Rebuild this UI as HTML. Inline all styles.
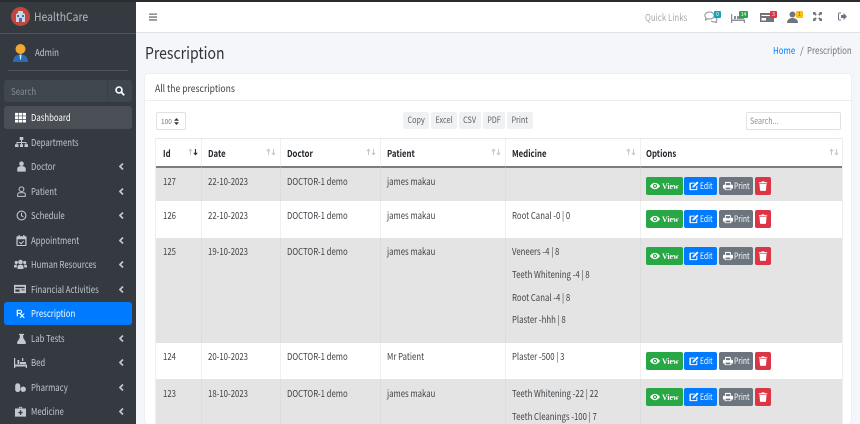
<!DOCTYPE html>
<html><head><meta charset="utf-8"><style>
*{box-sizing:border-box}
html,body{margin:0;padding:0}
body{width:860px;height:424px;overflow:hidden;position:relative;background:#f4f6f9;font-family:"Noto Sans CJK SC","Liberation Sans",sans-serif;color:#212529;filter:blur(.3px)}
.a{position:absolute;white-space:nowrap}
.x{transform:scaleX(.83);transform-origin:0 0}
.t{font-size:9.5px;line-height:12px;color:#3f4448;transform:scaleX(.82);transform-origin:0 0}
.h{font-size:9.5px;line-height:12px;font-weight:700;color:#212529;transform:scaleX(.82);transform-origin:0 0}
.m{position:absolute;left:4px;width:128px;height:23px;color:#c2c7d0;font-size:9.5px;line-height:23px}
.m span{position:absolute;left:27px;white-space:nowrap;transform:scaleX(.82);transform-origin:0 0}
.m svg{position:absolute;top:6px;width:11px;height:11px;fill:#c2c7d0}
.m i{position:absolute;left:115px;top:8px;width:5px;height:7px}
.m i svg{left:0;top:0;width:5px;height:7px}
.b{position:absolute;height:18px;border-radius:2px;color:#fff;font-size:8.5px;line-height:18px;white-space:nowrap}
.b svg{position:absolute;top:4px;width:10px;height:10px;fill:#fff}
.b span{transform:scaleX(.8);transform-origin:0 0}
.g{background:#28a745;left:646px;width:37px;font-family:"Liberation Serif",serif;font-weight:700}
.g span{position:absolute;left:16px;transform:scaleX(.92)}
.e{background:#007bff;left:684px;width:33px}
.e span{position:absolute;left:16px}
.p{background:#6c757d;left:719px;width:34px}
.p span{position:absolute;left:15px}
.d{background:#dc3545;left:755px;width:16px}
.ex{position:absolute;top:112px;height:17px;background:#f0f1f3;border-radius:2px;font-size:8.5px;line-height:17px;color:#5a6066;text-align:center}
.ex span{display:inline-block;transform:scaleX(.85)}
.s{position:absolute;top:148px;width:10px;height:8px}
.bd{position:absolute;width:7px;height:7px;border-radius:1px;font-size:5px;line-height:7px;text-align:center;color:#fff}
.n{position:absolute;top:11px;width:14px;height:12px;fill:#8b9096}
</style></head><body>
<svg width="0" height="0" style="position:absolute"><defs>
<symbol id="ch" viewBox="0 0 5 7"><path d="M4 .5L1 3.5l3 3" fill="none" stroke="#c2c7d0" stroke-width="1.7"/></symbol>
<symbol id="eye" viewBox="0 0 12 12"><path fill-rule="evenodd" d="M6 2.2C3.2 2.2 1.2 4.2 0 6c1.200 1.800 3.200 3.800 6 3.800S10.800 7.800 12 6c-1.200-1.800-3.200-3.800-6-3.800zM6 3.500a2.500 2.500 0 1 1 0 5 2.500 2.500 0 0 1 0-5zM6 4.800a1.200 1.200 0 1 0 0 2.400 1.200 1.200 0 0 0 0-2.400z"/></symbol>
<symbol id="ed" viewBox="0 0 12 12"><path d="M1.500 2h6L6.300 3.200H2.200v6.600h6.600V6.500L10 5.300V10a1 1 0 0 1-1 1H1.500a1 1 0 0 1-1-1V3a1 1 0 0 1 1-1zM9.800.6l1.600 1.600L6 7.600l-2 .4.400-2z"/></symbol>
<symbol id="pr" viewBox="0 0 12 12"><path fill-rule="evenodd" d="M2.500 1h6l1 1v2.500H11a1 1 0 0 1 1 1V9h-2v2H2V9H0V5.500a1 1 0 0 1 1-1h1.500zM3.500 2v3h5V2.500H3.500zM3.200 8v2h5.600V8z"/></symbol>
<symbol id="tr" viewBox="0 0 12 12"><path d="M4.500.5h3l.5 1h3v1.300H1V1.500h3zM1.800 3.600h8.400L9.600 11a1 1 0 0 1-1 .9H3.400a1 1 0 0 1-1-.9z"/></symbol>
<symbol id="ar" viewBox="0 0 10 8"><path d="M2.500 7V1.500M.8 3.200L2.500 1.300l1.700 1.900" fill="none" stroke="#c4c6c8" stroke-width="1"/><path d="M7.500 1v5.500M5.800 4.800l1.700 1.900 1.700-1.900" fill="none" stroke="#c4c6c8" stroke-width="1"/></symbol>
<symbol id="ar2" viewBox="0 0 10 8"><path d="M2.500 7V1.500M.8 3.200L2.500 1.300l1.700 1.900" fill="none" stroke="#c4c6c8" stroke-width="1"/><path d="M7.500 1v5.500M5.800 4.800l1.700 1.900 1.700-1.900" fill="none" stroke="#333" stroke-width="1.100"/></symbol>
</defs></svg>

<!-- Sidebar -->
<div class="a" style="left:0;top:0;width:136px;height:424px;background:#343a40"></div>
<div class="a" style="left:0;top:0;width:860px;height:2px;background:#2a2d30"></div>
<div class="a" style="left:0;top:33px;width:136px;height:1px;background:#4b545c"></div>
<div class="a" style="left:8px;top:70px;width:120px;height:1px;background:#4b545c"></div>
<svg class="a" style="left:11px;top:7px" width="19" height="19" viewBox="0 0 19 19"><circle cx="9.500" cy="9.500" r="9.500" fill="#c0473f"/><path d="M5 15V7l2-1V4h5v2l2 1v8z" fill="#c9d6e4"/><path d="M8 15v-4h3v4zM6 8h2v2H6zM11 8h2v2h-2z" fill="#4a6fa5"/></svg>
<div class="a" style="left:34px;top:9px;font-size:11.500px;line-height:16px;color:#b5b9be;transform:scaleX(.9);transform-origin:0 0">HealthCare</div>
<svg class="a" style="left:13px;top:43px" width="15" height="20" viewBox="0 0 15 20"><circle cx="7.500" cy="6" r="5" fill="#f0a830"/><path d="M0 19c0-5 3-7.500 7.500-7.500S15 14 15 19z" fill="#2b6cb8"/><path d="M6.500 11.500h2l-.5 5h-1z" fill="#dce6f0"/></svg>
<div class="a x" style="left:35px;top:46px;font-size:9.500px;line-height:13px;color:#c2c7d0">Admin</div>
<div class="a" style="left:4px;top:80px;width:128px;height:22px;background:#3f474e;border-radius:3px"></div>
<div class="a" style="left:107px;top:80px;width:1px;height:22px;background:#383f45"></div>
<div class="a x" style="left:11px;top:85px;font-size:9.500px;line-height:12px;color:#868c92">Search</div>
<svg class="a" style="left:115px;top:86px" width="10" height="10" viewBox="0 0 10 10"><circle cx="4" cy="4" r="3" fill="none" stroke="#fff" stroke-width="1.600"/><path d="M6.300 6.300L9.200 9.200" stroke="#fff" stroke-width="1.800"/></svg>

<div class="m" style="top:106px;background:#494f55;border-radius:3px;color:#fff"><svg viewBox="0 0 12 12" style="left:11px;fill:#fff"><path d="M0 1h3.500v3H0zM4.200 1h3.600v3H4.200zM8.500 1H12v3H8.500zM0 4.700h3.500v3H0zM4.200 4.700h3.600v3H4.200zM8.500 4.700H12v3H8.500zM0 8.400h3.500v3H0zM4.200 8.400h3.600v3H4.200zM8.500 8.400H12v3H8.500z"/></svg><span>Dashboard</span></div>
<div class="m" style="top:130.500px"><svg viewBox="0 0 13 13" style="left:10.500px;width:13px;height:13px;top:5px"><path d="M4.700 1h3.600v3H7v2h4.500v2.300H13V11H9.500V8.300h1V7h-3.500v1.300h1V11H5V8.300h1V7H2.500v1.300h1V11H0V8.300h1.500V6H6V4H4.700z"/></svg><span>Departments</span></div>
<div class="m" style="top:155px"><svg viewBox="0 0 13 13" style="left:11.500px"><circle cx="6.500" cy="3.200" r="2.700"/><path d="M1.500 12.500V9c0-1.800 2-3 5-3s5 1.200 5 3v3.500z"/></svg><span>Doctor</span><i><svg viewBox="0 0 5 7"><use href="#ch"/></svg></i></div>
<div class="m" style="top:179.500px"><svg viewBox="0 0 13 13" style="left:12px"><path fill="none" stroke="#c2c7d0" stroke-width="1.200" d="M6.500 1a2.800 2.800 0 1 0 0 5.600 2.800 2.800 0 0 0 0-5.600zM2 12.200V10c0-1.300 1-2 2.200-2h4.600c1.200 0 2.200.7 2.200 2v2.200z"/></svg><span>Patient</span><i><svg viewBox="0 0 5 7"><use href="#ch"/></svg></i></div>
<div class="m" style="top:204px"><svg viewBox="0 0 13 13" style="left:11.500px"><circle cx="6.500" cy="6.500" r="5.200" fill="none" stroke="#c2c7d0" stroke-width="1.300"/><path d="M6.500 3.200v3.500l2.300 1.500" fill="none" stroke="#c2c7d0" stroke-width="1.200"/></svg><span>Schedule</span><i><svg viewBox="0 0 5 7"><use href="#ch"/></svg></i></div>
<div class="m" style="top:228.500px"><svg viewBox="0 0 13 13" style="left:11.500px"><path fill-rule="evenodd" d="M3 0h1.500v1.500h4V0H10v1.500h1.500a1 1 0 0 1 1 1V12a1 1 0 0 1-1 1h-10a1 1 0 0 1-1-1V2.500a1 1 0 0 1 1-1H3zM2 5v6.800h9V5z"/><path d="M4 8.300l2 2 3.200-3.300" fill="none" stroke="#c2c7d0" stroke-width="1.200"/></svg><span>Appointment</span><i><svg viewBox="0 0 5 7"><use href="#ch"/></svg></i></div>
<div class="m" style="top:253px"><svg viewBox="0 0 13 13" style="left:10px;width:13px;height:13px;top:5px"><circle cx="6.500" cy="4" r="2.300"/><circle cx="2.300" cy="4.500" r="1.600"/><circle cx="10.700" cy="4.500" r="1.600"/><path d="M3.500 11V8.500c0-1 1-1.800 3-1.800s3 .8 3 1.800V11zM0 9.500V8c0-1 .8-1.500 2.800-1.500v3zM13 9.500V8c0-1-.8-1.500-2.800-1.500v3z"/></svg><span>Human Resources</span><i><svg viewBox="0 0 5 7"><use href="#ch"/></svg></i></div>
<div class="m" style="top:277.500px"><svg viewBox="0 0 13 13" style="left:10px;width:12px;height:12px;top:5.500px"><path fill-rule="evenodd" d="M0 2h13v9H0zM1.500 4v1.500h10V4zM1.500 7v2.500H6V7zM8 7v1h3.500V7z"/></svg><span>Financial Activities</span><i><svg viewBox="0 0 5 7"><use href="#ch"/></svg></i></div>
<div class="m" style="top:302px;background:#007bff;border-radius:3px;color:#fff"><svg viewBox="0 0 13 13" style="left:12px;width:9px;height:9px;top:7px;fill:#fff"><path fill-rule="evenodd" d="M1 1h5a3 3 0 0 1 1 5.700L8.800 8.500 10.500 6.500H12.500L9.900 9.600l2.900 3.200H10.600L8.800 10.800 7 12.800H5L7.700 9.700 5 7H2.800v3.500H1zM2.800 2.600V5.400H6A1.400 1.400 0 0 0 6 2.600z"/></svg><span>Prescription</span></div>
<div class="m" style="top:326.500px"><svg viewBox="0 0 13 13" style="left:11.500px"><path d="M3.500 1h6v1.300h-1V5.500l3.200 5.500c.5 1-.2 2-1.200 2h-8c-1 0-1.700-1-1.200-2l3.200-5.500V2.300h-1z"/></svg><span>Lab Tests</span><i><svg viewBox="0 0 5 7"><use href="#ch"/></svg></i></div>
<div class="m" style="top:351px"><svg viewBox="0 0 13 13" style="left:10px;width:13px;height:13px;top:5px"><path d="M0 2h1.200v6.500H13V12h-1.200v-1.500H1.200V12H0zM3.500 4h1.800v4H3.500zM6 6h6v2H6zM8 2h1.300v3H8z"/></svg><span>Bed</span><i><svg viewBox="0 0 5 7"><use href="#ch"/></svg></i></div>
<div class="m" style="top:375.500px"><svg viewBox="0 0 13 13" style="left:11px"><path d="M3.200 1.500a3 3 0 0 1 3 3V9a3 3 0 0 1-6 0V4.500a3 3 0 0 1 3-3z"/><circle cx="9.700" cy="8.500" r="3.200"/></svg><span>Pharmacy</span><i><svg viewBox="0 0 5 7"><use href="#ch"/></svg></i></div>
<div class="m" style="top:400px"><svg viewBox="0 0 13 13" style="left:11px"><path fill-rule="evenodd" d="M4.500 1h4v2H13v9.500H0V3h4.500zM5.500 2v1h2V2zM5.800 5v2H4v1.500h1.800v2h1.500v-2H9V7H7.300V5z"/></svg><span>Medicine</span><i><svg viewBox="0 0 5 7"><use href="#ch"/></svg></i></div>

<!-- Topbar -->
<div class="a" style="left:136px;top:2px;width:724px;height:31px;background:#fff;border-bottom:1px solid #dee2e6"></div>
<svg class="a" style="left:149px;top:13px" width="8" height="8" viewBox="0 0 8 8"><path d="M0 .5h8v1.300H0zM0 3.400h8v1.300H0zM0 6.300h8v1.300H0z" fill="#6c757d"/></svg>
<div class="a x" style="left:645px;top:11px;font-size:9.500px;line-height:13px;color:#a6abb0">Quick Links</div>
<svg class="n" style="left:704px" viewBox="0 0 14 12"><path d="M5.500 1C2.700 1 .8 2.600.8 4.500c0 1 .5 1.800 1.300 2.400L1.500 9l2.300-1.200c.5.100 1.100.2 1.700.2 2.800 0 4.700-1.600 4.700-3.500S8.300 1 5.500 1z" fill="none" stroke="#8b9096"/><path d="M11 6.500c1.200.5 2 1.200 2 2.300 0 .7-.4 1.200-.9 1.600l.4 1.300-1.800-.8c-1.500.2-2.800-.2-3.600-1" fill="none" stroke="#8b9096"/></svg>
<div class="bd" style="left:714px;top:11px;background:#17a2b8">0</div>
<svg class="n" style="left:731px" viewBox="0 0 14 12"><path d="M0 3h1.200v5.500H14V12h-1.200v-2H1.200v2H0zM3 5h2v3H3zM6 5h7v3H6z"/></svg>
<div class="bd" style="left:739px;top:11px;width:9px;background:#28a745">14</div>
<svg class="n" style="left:760px" viewBox="0 0 14 12"><path fill-rule="evenodd" d="M0 2h14v9H0zM1.500 4v1h11V4zM1.500 7v2.500H6V7z" fill="#6f757b"/></svg>
<div class="bd" style="left:770px;top:11px;background:#dc3545">3</div>
<svg class="n" style="left:787px" viewBox="0 0 14 12"><circle cx="5.500" cy="3.500" r="3" fill="#6f757b"/><path d="M0 12c0-3 2-5 5.500-5S11 9 11 12z" fill="#6f757b"/></svg>
<div class="bd" style="left:796px;top:11px;background:#ffc107;color:#555">1</div>
<svg class="a" style="left:813px;top:12px" width="9" height="9" viewBox="0 0 9 9"><path d="M0 0h3L2.200 .8 3.800 2.400 2.400 3.800.8 2.200 0 3zM9 0v3L8.200 2.200 6.600 3.800 5.200 2.400 6.800.8 6 0zM0 9V6l.8.800 1.600-1.600 1.400 1.400-1.600 1.600L3 9zM9 9H6l.8-.8-1.600-1.600 1.400-1.400 1.600 1.600L9 6z" fill="#6c757d"/></svg>
<svg class="a" style="left:838px;top:12px" width="9" height="9" viewBox="0 0 9 9"><path d="M3 1H1.500A1 1 0 0 0 .5 2v5a1 1 0 0 0 1 1H3" fill="none" stroke="#6c757d"/><path d="M5.500 1L9 4.500 5.500 8V6H3V3h2.500z" fill="#6c757d"/></svg>

<!-- Content header -->
<div class="a" style="left:145px;top:40px;font-size:16.500px;line-height:24px;color:#2f3337;transform:scaleX(.85);transform-origin:0 0">Prescription</div>
<div class="a x" style="left:773px;top:44px;font-size:9.500px;line-height:13px;color:#007bff">Home</div>
<div class="a" style="left:800px;top:44px;font-size:9.500px;line-height:13px;color:#6c757d">/</div>
<div class="a x" style="left:807px;top:44px;font-size:9.500px;line-height:13px;color:#6c757d">Prescription</div>

<!-- Card -->
<div class="a" style="left:145px;top:74px;width:706px;height:350px;background:#fff;border-radius:3px;box-shadow:0 0 1px rgba(0,0,0,.2)"></div>
<div class="a" style="left:145px;top:100px;width:706px;height:1px;background:#eceef0"></div>
<div class="a" style="left:155px;top:81px;font-size:10px;line-height:14px;color:#3a3f44;transform:scaleX(.86);transform-origin:0 0">All the prescriptions</div>

<div class="a" style="left:156px;top:112px;width:30px;height:18px;border:1px solid #dfe2e5;border-radius:2px;font-size:6.500px;line-height:16px;color:#6c757d;padding-left:4px">100</div>
<svg class="a" style="left:174px;top:118px" width="5" height="7" viewBox="0 0 5 7"><path d="M2.500 0L5 2.700H0zM2.500 7L0 4.300h5z" fill="#343a40"/></svg>
<div class="ex" style="left:403px;width:26px"><span>Copy</span></div>
<div class="ex" style="left:431px;width:26px"><span>Excel</span></div>
<div class="ex" style="left:459px;width:22px"><span>CSV</span></div>
<div class="ex" style="left:483px;width:22px"><span>PDF</span></div>
<div class="ex" style="left:507px;width:26px"><span>Print</span></div>
<div class="a" style="left:746px;top:112px;width:95px;height:18px;border:1px solid #dfe2e5;border-radius:2px"></div>
<div class="a x" style="left:750px;top:114px;font-size:8.500px;line-height:14px;color:#8a9096">Search...</div>

<!-- Table -->
<div class="a" style="left:156px;top:138px;width:686px;height:1px;background:#e6e8ea"></div>
<div class="a" style="left:156px;top:168px;width:686px;height:33px;background:#e4e4e4"></div>
<div class="a" style="left:156px;top:238px;width:686px;height:105px;background:#e4e4e4"></div>
<div class="a" style="left:156px;top:379px;width:686px;height:45px;background:#e4e4e4"></div>
<div class="a" style="left:156px;top:166px;width:686px;height:2px;background:#7c7c7c"></div>
<div class="a" style="left:155px;top:138px;width:1px;height:286px;background:#eceef0"></div>
<div class="a" style="left:201px;top:138px;width:1px;height:286px;background:rgba(200,205,210,.3)"></div>
<div class="a" style="left:280px;top:138px;width:1px;height:286px;background:rgba(200,205,210,.3)"></div>
<div class="a" style="left:380px;top:138px;width:1px;height:286px;background:rgba(200,205,210,.3)"></div>
<div class="a" style="left:505px;top:138px;width:1px;height:286px;background:rgba(200,205,210,.3)"></div>
<div class="a" style="left:640px;top:138px;width:1px;height:286px;background:rgba(200,205,210,.3)"></div>
<div class="a" style="left:842px;top:138px;width:1px;height:286px;background:#eceef0"></div>

<div class="a h" style="left:163px;top:147px">Id</div>
<div class="a h" style="left:208px;top:147px">Date</div>
<div class="a h" style="left:287px;top:147px">Doctor</div>
<div class="a h" style="left:387px;top:147px">Patient</div>
<div class="a h" style="left:512px;top:147px">Medicine</div>
<div class="a h" style="left:646px;top:147px">Options</div>
<svg class="s" style="left:188px" viewBox="0 0 10 8"><use href="#ar2"/></svg>
<svg class="s" style="left:266px" viewBox="0 0 10 8"><use href="#ar"/></svg>
<svg class="s" style="left:366px" viewBox="0 0 10 8"><use href="#ar"/></svg>
<svg class="s" style="left:491px" viewBox="0 0 10 8"><use href="#ar"/></svg>
<svg class="s" style="left:626px" viewBox="0 0 10 8"><use href="#ar"/></svg>
<svg class="s" style="left:829px" viewBox="0 0 10 8"><use href="#ar"/></svg>

<div class="a t" style="left:163px;top:175px">127</div><div class="a t" style="left:208px;top:175px">22-10-2023</div><div class="a t" style="left:287px;top:175px">DOCTOR-1 demo</div><div class="a t" style="left:387px;top:175px">james makau</div>
<div class="a t" style="left:163px;top:209px">126</div><div class="a t" style="left:208px;top:209px">22-10-2023</div><div class="a t" style="left:287px;top:209px">DOCTOR-1 demo</div><div class="a t" style="left:387px;top:209px">james makau</div><div class="a t" style="left:512px;top:209px">Root Canal -0 | 0</div>
<div class="a t" style="left:163px;top:245px">125</div><div class="a t" style="left:208px;top:245px">19-10-2023</div><div class="a t" style="left:287px;top:245px">DOCTOR-1 demo</div><div class="a t" style="left:387px;top:245px">james makau</div><div class="a t" style="left:512px;top:245px">Veneers -4 | 8</div>
<div class="a t" style="left:512px;top:268px">Teeth Whitening -4 | 8</div>
<div class="a t" style="left:512px;top:291px">Root Canal -4 | 8</div>
<div class="a t" style="left:512px;top:313px">Plaster -hhh | 8</div>
<div class="a t" style="left:163px;top:350px">124</div><div class="a t" style="left:208px;top:350px">20-10-2023</div><div class="a t" style="left:287px;top:350px">DOCTOR-1 demo</div><div class="a t" style="left:387px;top:350px">Mr Patient</div><div class="a t" style="left:512px;top:350px">Plaster -500 | 3</div>
<div class="a t" style="left:163px;top:387px">123</div><div class="a t" style="left:208px;top:387px">18-10-2023</div><div class="a t" style="left:287px;top:387px">DOCTOR-1 demo</div><div class="a t" style="left:387px;top:387px">james makau</div><div class="a t" style="left:512px;top:387px">Teeth Whitening -22 | 22</div>
<div class="a t" style="left:512px;top:410px">Teeth Cleanings -100 | 7</div>

<div class="b g" style="top:177px"><svg viewBox="0 0 12 12" style="left:4px"><use href="#eye"/></svg><span>View</span></div><div class="b e" style="top:177px"><svg viewBox="0 0 12 12" style="left:5px"><use href="#ed"/></svg><span>Edit</span></div><div class="b p" style="top:177px"><svg viewBox="0 0 12 12" style="left:4px"><use href="#pr"/></svg><span>Print</span></div><div class="b d" style="top:177px"><svg viewBox="0 0 12 12" style="left:3px"><use href="#tr"/></svg></div>
<div class="b g" style="top:210px"><svg viewBox="0 0 12 12" style="left:4px"><use href="#eye"/></svg><span>View</span></div><div class="b e" style="top:210px"><svg viewBox="0 0 12 12" style="left:5px"><use href="#ed"/></svg><span>Edit</span></div><div class="b p" style="top:210px"><svg viewBox="0 0 12 12" style="left:4px"><use href="#pr"/></svg><span>Print</span></div><div class="b d" style="top:210px"><svg viewBox="0 0 12 12" style="left:3px"><use href="#tr"/></svg></div>
<div class="b g" style="top:247px"><svg viewBox="0 0 12 12" style="left:4px"><use href="#eye"/></svg><span>View</span></div><div class="b e" style="top:247px"><svg viewBox="0 0 12 12" style="left:5px"><use href="#ed"/></svg><span>Edit</span></div><div class="b p" style="top:247px"><svg viewBox="0 0 12 12" style="left:4px"><use href="#pr"/></svg><span>Print</span></div><div class="b d" style="top:247px"><svg viewBox="0 0 12 12" style="left:3px"><use href="#tr"/></svg></div>
<div class="b g" style="top:352px"><svg viewBox="0 0 12 12" style="left:4px"><use href="#eye"/></svg><span>View</span></div><div class="b e" style="top:352px"><svg viewBox="0 0 12 12" style="left:5px"><use href="#ed"/></svg><span>Edit</span></div><div class="b p" style="top:352px"><svg viewBox="0 0 12 12" style="left:4px"><use href="#pr"/></svg><span>Print</span></div><div class="b d" style="top:352px"><svg viewBox="0 0 12 12" style="left:3px"><use href="#tr"/></svg></div>
<div class="b g" style="top:388px"><svg viewBox="0 0 12 12" style="left:4px"><use href="#eye"/></svg><span>View</span></div><div class="b e" style="top:388px"><svg viewBox="0 0 12 12" style="left:5px"><use href="#ed"/></svg><span>Edit</span></div><div class="b p" style="top:388px"><svg viewBox="0 0 12 12" style="left:4px"><use href="#pr"/></svg><span>Print</span></div><div class="b d" style="top:388px"><svg viewBox="0 0 12 12" style="left:3px"><use href="#tr"/></svg></div>
</body></html>
